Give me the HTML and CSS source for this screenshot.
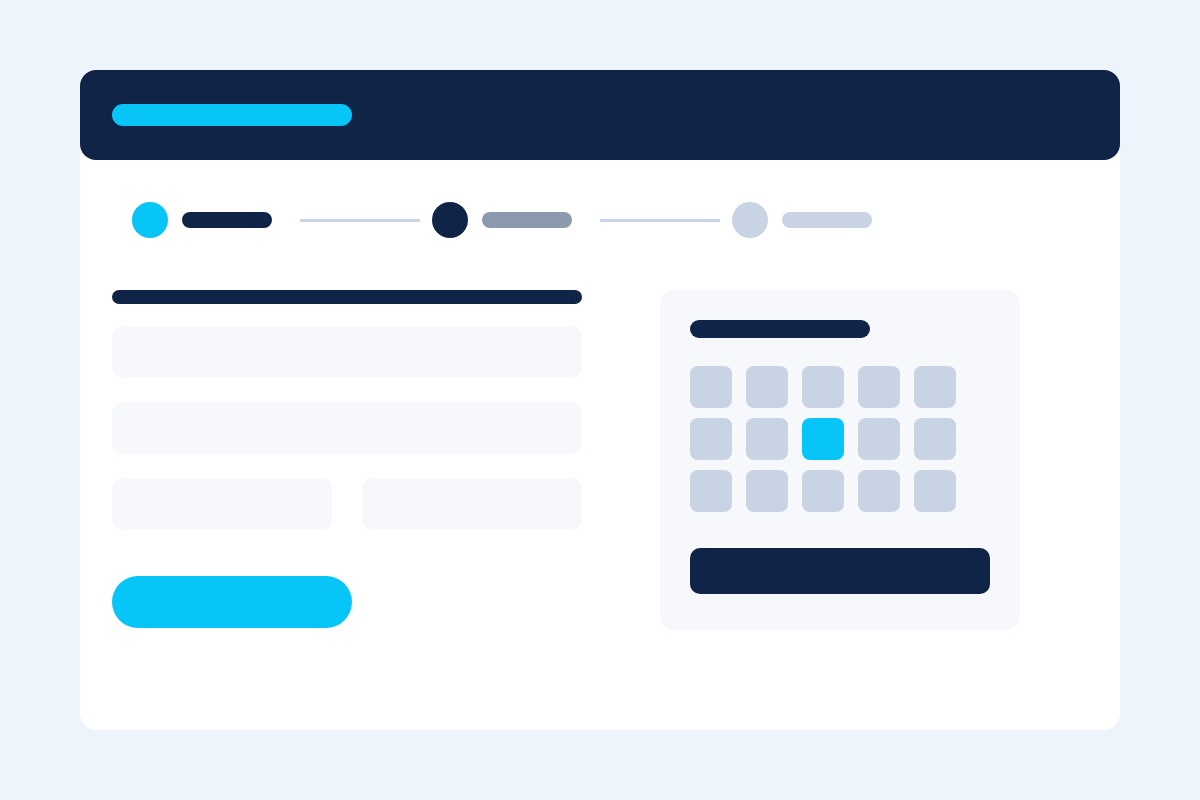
FILE: index.html
```html
<!DOCTYPE html>
<html lang="en">
<head>
<meta charset="utf-8">
<title>Booking wireframe</title>
<link rel="stylesheet" href="styles.css">
</head>
<body>
<div class="card">
  <div class="header"><div class="header-bar"></div></div>
  <div class="stepper">
    <div class="dot dot-active"></div>
    <div class="label label-dark"></div>
    <div class="connector"></div>
    <div class="dot dot-dark"></div>
    <div class="label label-mid"></div>
    <div class="connector"></div>
    <div class="dot dot-light"></div>
    <div class="label label-light"></div>
  </div>
  <div class="main">
    <div class="form">
      <div class="form-title"></div>
      <div class="field"></div>
      <div class="field"></div>
      <div class="field-row">
        <div class="field"></div>
        <div class="field"></div>
      </div>
      <div class="submit"></div>
    </div>
    <div class="panel">
      <div class="panel-title"></div>
      <div class="grid">
        <div class="cell"></div><div class="cell"></div><div class="cell"></div><div class="cell"></div><div class="cell"></div>
        <div class="cell"></div><div class="cell"></div><div class="cell cell-on"></div><div class="cell"></div><div class="cell"></div>
        <div class="cell"></div><div class="cell"></div><div class="cell"></div><div class="cell"></div><div class="cell"></div>
      </div>
      <div class="panel-button"></div>
    </div>
  </div>
</div>
</body>
</html>
```

FILE: styles.css
```css
html, body {
  margin: 0;
  padding: 0;
}
body {
  background: #EDF4FC;
  width: 1200px;
  height: 800px;
  overflow: hidden;
  font-family: "Liberation Sans", Arial, sans-serif;
  padding-top: 70px;
  box-sizing: border-box;
}
.card {
  margin-left: 80px;
  width: 1040px;
  height: 660px;
  background: #FFFFFF;
  border-radius: 16px;
  box-sizing: border-box;
}
.header {
  height: 90px;
  background: #0F2446;
  border-radius: 16px;
  padding-left: 32px;
  display: flex;
  align-items: center;
}
.header-bar {
  width: 240px;
  height: 22px;
  border-radius: 11px;
  background: #08C5F8;
}
.stepper {
  display: flex;
  align-items: center;
  margin-top: 42px;
  padding-left: 52px;
  height: 36px;
}
.dot {
  width: 36px;
  height: 36px;
  border-radius: 50%;
  flex: none;
}
.dot-active { background: #08C5F8; }
.dot-dark { background: #0F2446; }
.dot-light { background: #C8D3E3; }
.label {
  width: 90px;
  height: 16px;
  border-radius: 8px;
  margin-left: 14px;
  flex: none;
}
.label-dark { background: #0F2446; }
.label-mid { background: #8C9AAE; }
.label-light { background: #C8D3E3; }
.connector {
  width: 120px;
  height: 3px;
  background: #C8D3E3;
  margin-left: 28px;
  margin-right: 12px;
  flex: none;
}
.main {
  display: flex;
  margin-top: 52px;
  padding-left: 32px;
  gap: 78px;
}
.form {
  width: 470px;
  display: flex;
  flex-direction: column;
}
.form-title {
  height: 14px;
  border-radius: 7px;
  background: #0F2446;
  margin-bottom: 22px;
}
.field {
  height: 52px;
  border-radius: 10px;
  background: #F6F8FC;
  margin-bottom: 24px;
}
.field-row {
  display: flex;
  gap: 30px;
}
.field-row .field {
  flex: 1;
  margin-bottom: 0;
}
.submit {
  margin-top: 46px;
  width: 240px;
  height: 52px;
  border-radius: 26px;
  background: #08C5F8;
}
.panel {
  width: 360px;
  height: 340px;
  box-sizing: border-box;
  background: #F6F8FC;
  border-radius: 14px;
  padding: 30px;
}
.panel-title {
  width: 180px;
  height: 18px;
  border-radius: 9px;
  background: #0F2446;
}
.grid {
  margin-top: 28px;
  display: grid;
  grid-template-columns: repeat(5, 42px);
  grid-auto-rows: 42px;
  column-gap: 14px;
  row-gap: 10px;
}
.cell {
  border-radius: 8px;
  background: #C8D3E3;
}
.cell-on {
  background: #08C5F8;
}
.panel-button {
  margin-top: 36px;
  height: 46px;
  border-radius: 10px;
  background: #0F2446;
}
```
